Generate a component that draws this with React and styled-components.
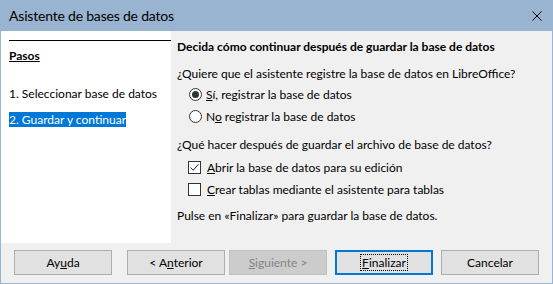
import React from "react"
import styled, { createGlobalStyle } from "styled-components"

const GlobalStyle = createGlobalStyle`
	html, body {
		margin: 0;
		padding: 0;
		background: #ffffff;
	}
	body {
		font-family: Lato, "Noto Sans", sans-serif;
		font-size: 12px;
		color: #000000;
	}
`

const Window = styled.div`
	width: 553px;
	height: 284px;
	box-sizing: border-box;
	border: 1px solid #99b4d1;
	border-top: none;
	display: flex;
	flex-direction: column;
	background: #f0f0f0;
`

const TitleBar = styled.div`
	height: 31px;
	flex: none;
	display: flex;
	align-items: center;
	justify-content: space-between;
	padding: 0 10px 0 8px;
	background: #99b4d1;
	font-size: 14px;
	letter-spacing: -0.2px;
`

const Body = styled.div`
	flex: 1;
	display: flex;
	min-height: 0;
`

const Sidebar = styled.div`
	width: 170px;
	flex: none;
	background: #ffffff;
	padding: 9px 0 0 8px;
	box-sizing: border-box;
`

const StepsHeader = styled.div`
	border-top: 1px solid #000000;
	padding-top: 7px;
	line-height: 15px;
	font-weight: bold;
	text-decoration: underline;
`

const StepList = styled.div`
	display: flex;
	flex-direction: column;
	align-items: flex-start;
	gap: 11px;
	margin-top: 23px;
`

const Step = styled.div`
	line-height: 15px;
	background: ${(props) => (props.$active ? "#0078d7" : "transparent")};
	color: ${(props) => (props.$active ? "#ffffff" : "#000000")};
`

const Main = styled.div`
	flex: 1;
	padding: 8px 0 0 6px;
	display: flex;
	flex-direction: column;
`

const Heading = styled.div`
	font-weight: bold;
	line-height: 15px;
`

const Text = styled.div`
	line-height: 15px;
	margin-top: ${(props) => props.$top || 0}px;
`

const Options = styled.div`
	display: flex;
	flex-direction: column;
	margin: ${(props) => props.$top || 0}px 0 0 12px;
`

const Option = styled.label`
	height: 22px;
	display: flex;
	align-items: center;
	line-height: 15px;
`

const Radio = styled.span`
	width: 13px;
	height: 13px;
	box-sizing: border-box;
	border: 1px solid #333333;
	border-radius: 50%;
	background: #ffffff;
	margin-right: 4px;
	display: flex;
	align-items: center;
	justify-content: center;

	&::after {
		content: "";
		width: 7px;
		height: 7px;
		border-radius: 50%;
		background: ${(props) => (props.$checked ? "#333333" : "transparent")};
	}
`

const Box = styled.span`
	width: 13px;
	height: 13px;
	box-sizing: border-box;
	border: 1px solid #333333;
	background: #ffffff;
	margin: 0 6px 0 -1px;
	display: flex;
	align-items: center;
	justify-content: center;
`

const Key = styled.span`
	text-decoration: underline;
`

const ButtonBar = styled.div`
	height: 40px;
	flex: none;
	display: flex;
	align-items: flex-start;
	padding: 7px 13px 0;
	box-sizing: border-box;
`

const Button = styled.div`
	width: 98px;
	height: 25px;
	box-sizing: border-box;
	margin-left: ${(props) => props.$gap || 0}px;
	display: flex;
	align-items: center;
	justify-content: center;
	background: ${(props) => (props.$disabled ? "#cccccc" : "#e1e1e1")};
	border: ${(props) =>
		props.$focused
			? "2px solid #0078d7"
			: props.$disabled
			? "1px solid #bfbfbf"
			: "1px solid #adadad"};
	color: ${(props) => (props.$disabled ? "#838383" : "#000000")};
`

const FocusRing = styled.span`
	outline: 1px dotted #000000;
	outline-offset: 0;
	padding: 0 1px;
	line-height: 15px;
`

const CloseIcon = () => (
	<svg width="10" height="10" viewBox="0 0 10 10">
		<path d="M0.5 0.5 L9.5 9.5 M9.5 0.5 L0.5 9.5" stroke="#000" strokeWidth="1" />
	</svg>
)

const CheckMark = () => (
	<svg width="11" height="11" viewBox="0 0 11 11">
		<path d="M1.5 5.5 L4.2 8.3 L9.5 2.2" fill="none" stroke="#222" strokeWidth="1" />
	</svg>
)

export default function App() {
	return (
		<>
			<GlobalStyle />
			<Window>
				<TitleBar>
					<span>Asistente de bases de datos</span>
					<CloseIcon />
				</TitleBar>
				<Body>
					<Sidebar>
						<StepsHeader>Pasos</StepsHeader>
						<StepList>
							<Step>1. Seleccionar base de datos</Step>
							<Step $active>2. Guardar y continuar</Step>
						</StepList>
					</Sidebar>
					<Main>
						<Heading>Decida cómo continuar después de guardar la base de datos</Heading>
						<Text $top={12}>
							¿Quiere que el asistente registre la base de datos en LibreOffice?
						</Text>
						<Options $top={2}>
							<Option>
								<Radio $checked />
								<span>
									<Key>S</Key>í, registrar la base de datos
								</span>
							</Option>
							<Option>
								<Radio />
								<span>
									N<Key>o</Key> registrar la base de datos
								</span>
							</Option>
						</Options>
						<Text $top={10}>¿Qué hacer después de guardar el archivo de base de datos?</Text>
						<Options $top={4}>
							<Option>
								<Box>
									<CheckMark />
								</Box>
								<span>
									<Key>A</Key>brir la base de datos para su edición
								</span>
							</Option>
							<Option>
								<Box />
								<span>
									<Key>C</Key>rear tablas mediante el asistente para tablas
								</span>
							</Option>
						</Options>
						<Text $top={8}>Pulse en «Finalizar» para guardar la base de datos.</Text>
					</Main>
				</Body>
				<ButtonBar>
					<Button>
						<span>
							Ay<Key>u</Key>da
						</span>
					</Button>
					<Button $gap={15}>
						<span>
							&lt; A<Key>n</Key>terior
						</span>
					</Button>
					<Button $gap={4} $disabled>
						<span>
							<Key>S</Key>iguiente &gt;
						</span>
					</Button>
					<Button $gap={8} $focused>
						<FocusRing>
							<Key>F</Key>inalizar
						</FocusRing>
					</Button>
					<Button $gap={8}>
						<span>Cancelar</span>
					</Button>
				</ButtonBar>
			</Window>
		</>
	)
}
